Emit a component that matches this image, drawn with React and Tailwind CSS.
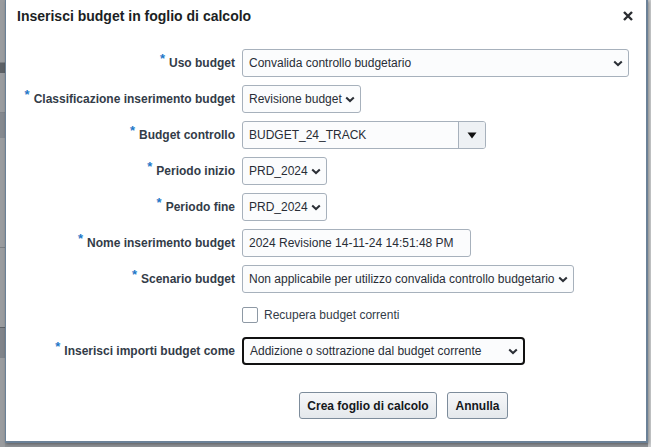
import React from 'react';

const font = { fontFamily: '"Liberation Sans", Arial, sans-serif' };

function Chevron() {
  return (
    <svg width="10" height="7" viewBox="0 0 10 7" className="shrink-0">
      <path d="M1.2 1.4 L5 5 L8.8 1.4" fill="none" stroke="#2b2f36" strokeWidth="2" />
    </svg>
  );
}

function Label({ children }) {
  return (
    <div className="w-[229px] shrink-0 text-right text-[12px] font-bold text-[#333c48] leading-4">
      <span className="text-[#1f78c8] text-[13px] font-bold relative -top-[4px] mr-[4px]">*</span>
      {children}
    </div>
  );
}

function Select({ value, w, strong }) {
  return (
    <div
      className={`flex items-center h-7 pl-[6px] pr-[5px] gap-[3px] bg-[#fbfcfd] text-[12px] text-[#282d36] ${
        strong ? 'border-2 border-[#111] rounded-[4px] pl-[5px]' : 'border border-[#a7b1bc] rounded-[3px]'
      }`}
      style={w ? { width: w } : undefined}
    >
      <span className="whitespace-nowrap">{value}</span>
      <span className={w ? 'ml-auto' : ''}><Chevron /></span>
    </div>
  );
}

function Row({ label, children }) {
  return (
    <div className="flex items-center gap-[7px] h-7">
      {label ? <Label>{label}</Label> : <div className="w-[229px] shrink-0" />}
      {children}
    </div>
  );
}

export default function App() {
  return (
    <div className="w-[651px] h-[447px] bg-[#8e9195] overflow-hidden relative" style={font}>
      {/* fondo sfocato dell'applicazione dietro al dialogo */}
      <div className="absolute left-0 top-0 w-[5px] h-full bg-[#9a9c9f]">
        <div className="h-[63px] border-b border-[#7c7f83]" />
        <div className="h-[10px] bg-[#5d6166]" />
        <div className="h-[40px] border-b border-[#80848a]" />
        <div className="h-[25px] bg-[#85898f]" />
        <div className="h-[110px] border-b border-[#7c7f83]" />
        <div className="h-[80px] border-b border-[#5d6166]" />
        <div className="h-[30px] bg-[#80848a]" />
      </div>
      <div className="absolute right-0 top-0 w-[3px] h-full bg-[#c9cbcd]" />

      <div className="ml-[5px] w-[643px] h-[443px] bg-white border-l border-r-2 border-b-2 border-[#6b8197] shadow-[1px_1px_3px_rgba(0,0,0,0.35)] flex flex-col relative">
        <div className="flex items-start pt-2 pl-[11px] pr-[13px]">
          <h1 className="text-[14px] leading-4 font-bold text-[#1c1f24]">Inserisci budget in foglio di calcolo</h1>
          <svg width="10" height="10" viewBox="0 0 10 10" className="ml-auto mt-[3px]">
            <path d="M1 1 L9 9 M9 1 L1 9" stroke="#2a2d31" strokeWidth="2.4" />
          </svg>
        </div>

        <div className="flex flex-col gap-2 mt-[25px]">
          <Row label="Uso budget">
            <Select value="Convalida controllo budgetario" w={387} />
          </Row>
          <Row label="Classificazione inserimento budget">
            <Select value="Revisione budget" />
          </Row>
          <Row label="Budget controllo">
            <div className="flex h-7 w-[244px] border border-[#a7b1bc] rounded-[3px] bg-[#fbfcfd] overflow-hidden">
              <div className="flex-1 flex items-center pl-[6px] text-[12px] text-[#282d36]">BUDGET_24_TRACK</div>
              <div className="w-[27px] border-l border-[#a7b1bc] bg-[#eef1f4] flex items-center justify-center">
                <svg width="10" height="7" viewBox="0 0 10 7">
                  <path d="M0.5 0.5 H9.5 L5 6.5 Z" fill="#111" />
                </svg>
              </div>
            </div>
          </Row>
          <Row label="Periodo inizio">
            <Select value="PRD_2024" />
          </Row>
          <Row label="Periodo fine">
            <Select value="PRD_2024" />
          </Row>
          <Row label="Nome inserimento budget">
            <div className="flex items-center h-7 w-[229px] pl-[6px] border border-[#a7b1bc] rounded-[3px] bg-[#fbfcfd] text-[12px] text-[#282d36] whitespace-nowrap">
              2024 Revisione 14-11-24 14:51:48 PM
            </div>
          </Row>
          <Row label="Scenario budget">
            <Select value="Non applicabile per utilizzo convalida controllo budgetario" />
          </Row>
          <Row>
            <div className="flex items-center gap-[6px]">
              <div className="w-4 h-4 border border-[#8e99a5] rounded-[2px] bg-white" />
              <span className="text-[12px] text-[#333c48]">Recupera budget correnti</span>
            </div>
          </Row>
          <Row label="Inserisci importi budget come">
            <Select value="Addizione o sottrazione dal budget corrente" w={283} strong />
          </Row>
        </div>

        <div className="flex gap-[10px] pl-[293px] mt-[27px]">
          <button className="h-[27px] w-[138px] rounded-[3px] border border-[#7d8c9b] bg-gradient-to-b from-[#f6f7f9] to-[#e4e8ec] text-[12px] font-bold text-[#15181c]">
            Crea foglio di calcolo
          </button>
          <button className="h-[27px] w-[61px] rounded-[3px] border border-[#7d8c9b] bg-gradient-to-b from-[#f6f7f9] to-[#e4e8ec] text-[12px] font-bold text-[#15181c]">
            Annulla
          </button>
        </div>
      </div>
    </div>
  );
}
